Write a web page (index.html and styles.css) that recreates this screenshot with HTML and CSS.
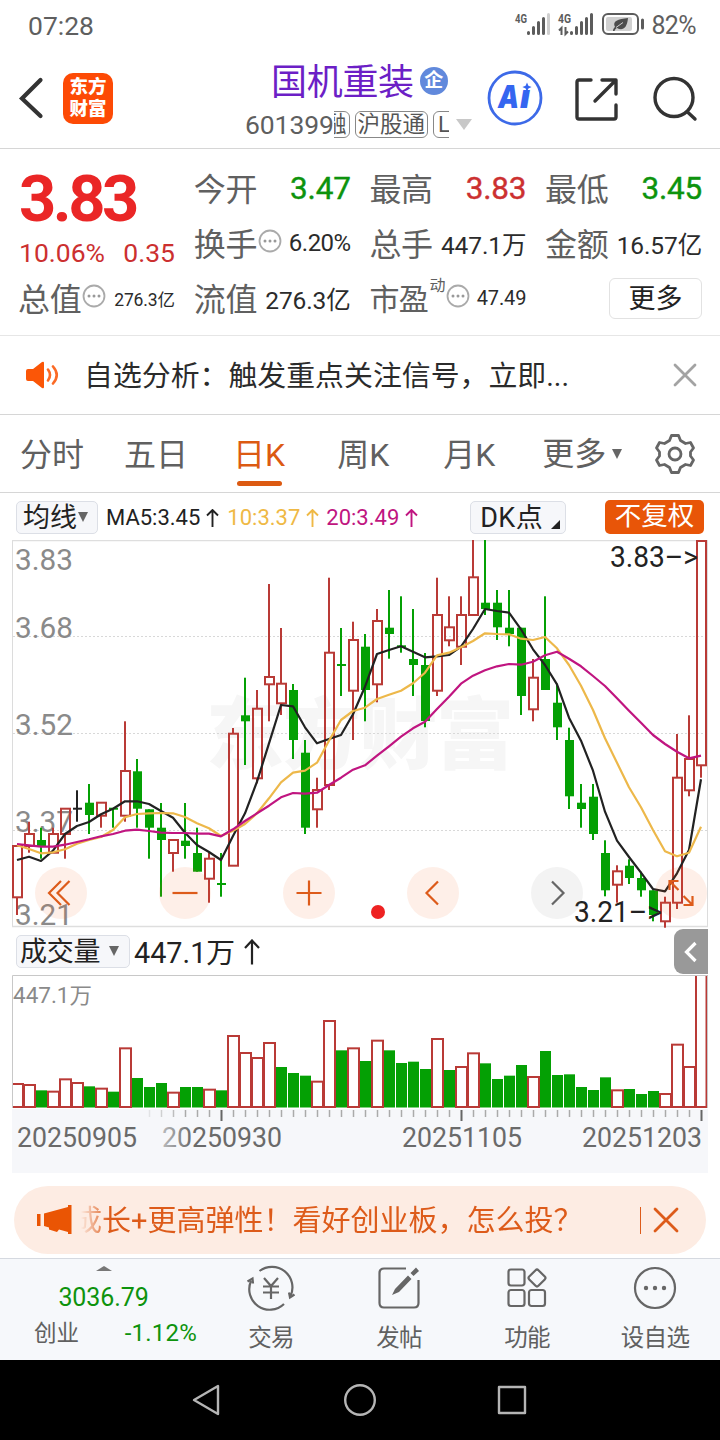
FILE: index.html
```html
<!DOCTYPE html>
<html lang="zh-CN">
<head>
<meta charset="utf-8">
<title>国机重装 601399</title>
<link rel="stylesheet" href="styles.css">
</head>
<body>
<div class="phone">
  <div class="status">
    <span class="clock">07:28</span>
    <div class="status-right">
      <svg width="132" height="28" viewBox="513 10 132 28">
        <g class="sig-text"><text x="515" y="23" textLength="12" lengthAdjust="spacingAndGlyphs">4G</text><text x="558" y="23" textLength="13" lengthAdjust="spacingAndGlyphs">4G</text></g>
        <g stroke="#5c5c5c" stroke-width="3" stroke-linecap="round">
          <path d="M528.5 32.5v1M533.5 27.5v6M538.5 22.5v11M543.500 18.500v15M571.500 32.500v1M576.500 27.500v6M581.500 22.500v11M586.500 18.500v15M591.500 14.500v19"/>
          <path d="M548.500 14.500v19" stroke="#cfcfcf"/>
        </g>
        <path d="M561.500 35v-7l-2.500 2.500M565.500 27v7l2.500-2.500" fill="none" stroke="#5c5c5c" stroke-width="2"/>
        <rect x="603" y="14" width="35" height="20" rx="5" fill="none" stroke="#5c5c5c" stroke-width="2"/>
        <rect x="606" y="17" width="26" height="14" rx="2" fill="#d0d0d0"/>
        <path d="M613 31c0-2 .8-3 2-4-3-6 3-8 13-9-1 11-6 13-11 10-1.500.8-2 1.500-2.500 3z" fill="#4d4d4d"/>
        <path d="M616 27.500l7-5" stroke="#d0d0d0" stroke-width="1"/>
        <path d="M642.500 20v8" stroke="#5c5c5c" stroke-width="3" stroke-linecap="round"/>
      </svg>
      <span class="battery">82%</span>
    </div>
  </div>

  <header class="header">
    <svg class="back" width="26" height="44" viewBox="0 0 26 44"><path d="M22.500 4L4 22.500 22.500 40" fill="none" stroke="#333" stroke-width="4.200" stroke-linecap="round"/></svg>
    <div class="logo"><span>东方</span><span>财富</span></div>
    <div class="title">
      <div class="name-row"><span class="name">国机重装</span><span class="badge">企</span></div>
      <div class="code-row">
        <span class="code">601399</span>
        <span class="tags"><span class="tag tag-cut">融</span><span class="tag">沪股通</span><span class="tag tag-end">L</span></span>
        <i class="tri-grey"></i>
      </div>
    </div>
    <svg class="ai" width="56" height="56" viewBox="0 0 56 56">
      <circle cx="28" cy="28" r="26" fill="#fff" stroke="#3d6ae8" stroke-width="2.800"/>
      <text class="ai-text" x="11" y="38" textLength="21" lengthAdjust="spacingAndGlyphs">A</text>
      <text class="ai-text" x="33" y="38" textLength="10" lengthAdjust="spacingAndGlyphs">ı</text>
      <path d="M40 12.500l1.400 3.200 3.200 1.400-3.200 1.400L40 21.700l-1.400-3.200-3.200-1.400 3.200-1.400z" fill="#3566f0"/>
    </svg>
    <svg class="share" width="46" height="46" viewBox="0 0 46 46" fill="none" stroke="#333" stroke-width="3.400" stroke-linecap="round" stroke-linejoin="round"><path d="M17 4H5q-2 0-2 2V41q0 2 2 2H40q2 0 2-2V29M28 4H42V18M41 5L21 25"/></svg>
    <svg class="search" width="46" height="46" viewBox="0 0 46 46" fill="none" stroke="#333" stroke-width="3.400" stroke-linecap="round"><circle cx="22" cy="21.500" r="19"/><path d="M35.500 36L43 43"/></svg>
  </header>

  <section class="quote">
    <div class="col first">
      <div class="price">3.83</div>
      <div class="chg"><span>10.06%</span><span>0.35</span></div>
      <div class="cell last-cell"><span class="lab">总值</span><svg class="info" viewBox="0 0 24 24"><use href="#dots"/></svg><span class="val v-s">276.3亿</span></div>
    </div>
    <div class="col">
      <div class="cell"><span class="lab">今开</span><span class="val v-l green">3.47</span></div>
      <div class="cell"><span class="lab">换手</span><svg class="info" viewBox="0 0 24 24"><use href="#dots"/></svg><span class="val v-pct">6.20%</span></div>
      <div class="cell"><span class="lab">流值</span><span class="val">276.3亿</span></div>
    </div>
    <div class="col">
      <div class="cell"><span class="lab">最高</span><span class="val v-l red">3.83</span></div>
      <div class="cell"><span class="lab">总手</span><span class="val">447.1万</span></div>
      <div class="cell"><span class="lab lab-pe">市盈</span><sup class="dyn">动</sup><svg class="info" viewBox="0 0 24 24"><g id="dots"><circle cx="12" cy="12" r="10.500" fill="none" stroke="#aaa" stroke-width="1.800"/><g fill="#999"><circle cx="7" cy="12" r="1.500"/><circle cx="12" cy="12" r="1.500"/><circle cx="17" cy="12" r="1.500"/></g></g></svg><span class="val v-m">47.49</span></div>
    </div>
    <div class="col">
      <div class="cell"><span class="lab">最低</span><span class="val v-l green">3.45</span></div>
      <div class="cell"><span class="lab">金额</span><span class="val">16.57亿</span></div>
      <div class="cell"><button class="more">更多</button></div>
    </div>
  </section>

  <section class="notice">
    <svg width="36" height="30" viewBox="0 0 36 30"><path d="M3 9h5l9-7q2-1 2 1v24q0 2-2 1l-9-7H3q-2 0-2-2v-8q0-2 2-2z" fill="#fb5607"/><path d="M23 9.500q4 5.500 0 11M28 6.500q7.500 8.500 0 17" fill="none" stroke="#fb6a25" stroke-width="2.600" stroke-linecap="round"/></svg>
    <span class="notice-text">自选分析：触发重点关注信号，立即...</span>
    <svg width="24" height="24" viewBox="0 0 24 24"><path d="M2 2l20 20M22 2L2 22" stroke="#a3a3a3" stroke-width="2.800" stroke-linecap="round"/></svg>
  </section>

  <nav class="tabs">
    <span>分时</span><span class="t-week5">五日</span><span class="on">日K</span><span class="t-week">周K</span><span class="t-month">月K</span><span class="tab-more">更多<i class="tri"></i></span>
    <svg width="42" height="42" viewBox="-21 -21 42 42" fill="none" stroke="#666" stroke-width="2.800" stroke-linejoin="round"><path d="M-3.500-18.500H3.500L5.500-13.500 10.500-10.500 15.500-11.500 18.500-6 15.500-2V2L18.500 6 15.500 11.500 10.500 10.500 5.500 13.500 3.500 18.500H-3.500L-5.500 13.500-10.500 10.500-15.500 11.500-18.500 6-15.500 2V-2L-18.500-6-15.500-11.500-10.500-10.500-5.500-13.500z"/><circle r="6"/></svg>
  </nav>

  <section class="indicator">
    <span class="chip chip-ma"><span class="lift">均线</span><i class="tri"></i></span>
    <span class="ma ma5">MA5:3.45<svg class="up" viewBox="0 0 13 18"><path d="M6.500 18V1M1 6.500L6.500 1 12 6.500"/></svg></span>
    <span class="ma ma10">10:3.37<svg class="up" viewBox="0 0 13 18"><path d="M6.500 18V1M1 6.500L6.500 1 12 6.500"/></svg></span>
    <span class="ma ma20">20:3.49<svg class="up" viewBox="0 0 13 18"><path d="M6.500 18V1M1 6.500L6.500 1 12 6.500"/></svg></span>
    <span class="chip chip-dk"><span class="lift">DK点</span><i class="corner"></i></span>
    <span class="adj">不复权</span>
  </section>

  <section class="kline">
    <svg id="kline" width="720" height="388" viewBox="0 540 720 388"></svg>
    <div class="controls">
      <button><svg viewBox="-26 -26 52 52"><path d="M0-12L-12 0 0 12M8.500-12L-3.500 0 8.500 12"/></svg></button>
      <button><svg viewBox="-26 -26 52 52"><path d="M-12.500 0h25"/></svg></button>
      <button><svg viewBox="-26 -26 52 52"><path d="M-12.500 0h25M0-12.500v25"/></svg></button>
      <button><svg viewBox="-26 -26 52 52"><path d="M5-11.500L-6.500 0 5 11.500"/></svg></button>
      <button class="grey"><svg viewBox="-26 -26 52 52"><path d="M-5-11.500L6.500 0-5 11.500"/></svg></button>
      <button><svg viewBox="-26 -26 52 52"><path d="M-11.500-3v-9h9M-11.500-12l9 9M11.500 3v9h-9M11.500 12l-9-9"/></svg></button>
    </div>
  </section>

  <section class="vol-head">
    <span class="chip chip-vol"><span class="lift">成交量</span><i class="tri"></i></span>
    <span class="vol-val lift">447.1万</span>
    <svg class="vol-up" viewBox="0 0 16 26"><path d="M8 25.500V2M1 9L8 1.500 15 9" fill="none" stroke="#222" stroke-width="2.200"/></svg>
    <span class="drawer"><svg width="14" height="22" viewBox="0 0 14 22"><path d="M11.500 2L2.500 11l9 9" fill="none" stroke="#fff" stroke-width="3.200"/></svg></span>
  </section>
  <svg id="volume" width="720" height="134" viewBox="0 975 720 134"></svg>
  <svg id="axis" width="720" height="64" viewBox="0 1109 720 64"></svg>

  <section class="promo">
    <svg width="36" height="30" viewBox="0 0 36 30" fill="#ea5504"><path d="M0 9h3.500v12H0zM7 8.500L31 2V0h3.500v29H31v-2l-9-2.500-2 2.500-8-2.500v-2L7 21z"/></svg>
    <div class="promo-clip"><span>成长+更高弹性！看好创业板，怎么投？</span></div>
    <i class="promo-line"></i>
    <svg width="26" height="26" viewBox="0 0 26 26"><path d="M2 2l22 22M24 2L2 24" stroke="#dd5b1a" stroke-width="2.800" stroke-linecap="round"/></svg>
  </section>

  <nav class="bottom">
    <div class="index">
      <i class="tri-up"></i>
      <div class="idx-num">3036.79</div>
      <div class="idx-row"><span>创业</span><span class="green">-1.12%</span></div>
    </div>
    <div class="item"><svg viewBox="-24 -22 48 44"><path d="M-11.500-17A20.500 20.500 0 0 1 19.500 8M13 16A20.500 20.500 0 0 1-20-7M-23.500-6.500L-18.500-9.500-18-4.500M23.500 6.500L19 9.500 18 4.500M-7-10L0-2 7-10M0-2V11M-8-1.500H8M-8 4.500H8"/></svg><span>交易</span></div>
    <div class="item"><svg viewBox="-24 -22 48 44"><path d="M7-19.500H-15q-4.500 0-4.500 4.500V15q0 4.500 4.500 4.500H15q4.500 0 4.500-4.500V-8"/><path d="M-7 7L-4 1 9-12.500 12.500-9 0 4zM11.500-15L17-20.500 20-17 14.500-12z" fill="#666" stroke="none"/></svg><span>发帖</span></div>
    <div class="item"><svg viewBox="-24 -22 48 44"><rect x="-18.500" y="-18.500" width="16" height="16" rx="2.500"/><rect x="-18.500" y="2" width="16" height="16" rx="2.500"/><rect x="2" y="2" width="16" height="16" rx="2.500"/><rect x="3.500" y="-16.500" width="13" height="13" rx="2" transform="rotate(45 10 -10)"/></svg><span>功能</span></div>
    <div class="item"><svg viewBox="-24 -22 48 44"><circle r="20"/><g fill="#666" stroke="none"><circle cx="-9" r="2.200"/><circle r="2.200"/><circle cx="9" r="2.200"/></g></svg><span>设自选</span></div>
  </nav>

  <div class="sysnav">
    <svg width="340" height="40" viewBox="190 0 340 40" fill="none" stroke="#b5b5b5" stroke-width="2.400" stroke-linejoin="round"><path d="M194 20L218 6V34z"/><circle cx="360" cy="20" r="14.800"/><rect x="499" y="7" width="26" height="26"/></svg>
  </div>
</div>
<script src="chart.js"></script>
</body>
</html>
```

FILE: styles.css
```css
* { box-sizing: border-box; }
body { margin: 0; background: #fff; }
button { border: 0; padding: 0; font: inherit; color: inherit; }
svg { display: block; flex: none; }
.phone {
  width: 720px; height: 1440px; overflow: hidden;
  display: flex; flex-direction: column;
  font-family: Roboto, "Noto Sans CJK SC", sans-serif;
  color: #222; white-space: nowrap;
}
.phone > * { flex: none; }
.green { color: #0d930d; }
.red { color: #cc3030; }
.lift { padding-bottom: 3px; }
.tri { display: inline-block; border: 5.500px solid transparent; border-top: 10px solid #666; border-bottom: 0; }

/* status bar */
.status { height: 50px; display: flex; justify-content: space-between; padding: 0 24px 0 28px; color: #5f5f5f; font-size: 26.500px; line-height: 52px; }
.status-right { display: flex; gap: 6px; }
.status-right svg { margin-top: 10px; }
.battery { font-size: 25px; letter-spacing: -0.600px; }
.sig-text { font-size: 12.500px; font-weight: 700; fill: #5c5c5c; }

/* header */
.header { height: 99px; border-bottom: 1px solid #d6d6d6; display: flex; align-items: flex-start; }
.back { margin: 26px 0 0 18px; }
.logo { margin: 23px 0 0 19px; width: 50px; height: 51px; border-radius: 10px; background: #fd4a05; color: #fff; display: flex; flex-direction: column; align-items: center; padding-top: 3px; font-size: 18.500px; line-height: 22px; font-weight: 900; }
.title { margin-left: 132px; width: 228px; }
.name-row { display: flex; align-items: center; height: 58px; padding-left: 26px; }
.name { font-size: 36px; color: #6c1fc6; letter-spacing: -0.300px; }
.badge { margin: 3px 0 0 6px; width: 28px; height: 28px; border-radius: 50%; background: #6189dc; color: #fff; font-size: 19px; line-height: 27px; text-align: center; font-weight: 700; }
.code-row { display: flex; align-items: center; height: 32px; }
.code { font-size: 26.500px; color: #5f5f5f; letter-spacing: -0.100px; width: 89px; }
.tags { display: flex; width: 115px; overflow: hidden; gap: 5px; }
.tag { flex: none; height: 27px; border: 1.500px solid #888; border-radius: 6px; padding: 0 2px; font-size: 22.500px; line-height: 24px; color: #555; }
.tag-cut { margin-left: -13px; }
.tag-end { padding-left: 4px; width: 30px; }
.tri-grey { margin-left: 7px; border: 8.500px solid transparent; border-top: 11px solid #c8c8c8; border-bottom: 0; }
.ai { margin: 20px 0 0 14px; }
.ai-text { font: italic 900 32px Inter, Roboto, sans-serif; fill: #3566f0; }
.share { margin: 26px 0 0 31px; }
.search { margin: 26px 0 0 32px; }

/* quote */
.quote { height: 187px; border-bottom: 1px solid #e6e6e6; padding: 12px 18px 0 18px; display: grid; grid-template-columns: 157px 157px 157px 157px; gap: 18.700px; }
.cell { display: flex; align-items: center; height: 55px; }
.lab { font-size: 32px; color: #606060; letter-spacing: -0.300px; padding-bottom: 4px; }
.lab-pe { font-size: 30px; letter-spacing: -0.500px; }
.val { margin-left: auto; font-size: 24.500px; color: #2b2b2b; letter-spacing: -0.100px; padding-bottom: 1px; }
.v-l { font-size: 31.500px; letter-spacing: -0.200px; -webkit-text-stroke: 0.400px currentColor; }
.v-pct { font-size: 24px; letter-spacing: -0.500px; }
.v-s { font-size: 17.500px; }
.v-m { font-size: 20px; }
.val.green { color: #0d930d; }
.val.red { color: #cc3030; }
.info { width: 24px; height: 24px; margin: -6px 0 0 1px; }
.dyn { font-size: 16px; color: #606060; align-self: flex-start; line-height: 18px; margin: 6px 0 0 1px; }
.price { height: 76px; font-size: 65px; line-height: 76px; font-weight: 700; color: #ea2626; letter-spacing: -3.500px; padding-left: 1px; }
.chg { height: 34px; display: flex; justify-content: space-between; font-size: 26.500px; line-height: 32px; color: #cc3030; padding-left: 1px; }
.more { width: 93px; height: 41px; margin-left: auto; border: 1.500px solid #e2e2e2; border-radius: 6px; background: #fff; font-size: 27px; line-height: 36px; color: #222; }

/* notice */
.notice { height: 79px; border-bottom: 1px solid #d6d6d6; display: flex; align-items: center; padding: 0 23px 0 25px; }
.notice-text { flex: 1; margin-left: 23px; padding-bottom: 4px; font-size: 28.900px; color: #2b2b2b; }

/* period tabs */
.tabs { height: 78px; border-bottom: 1px solid #d6d6d6; display: flex; align-items: center; padding: 0 24px 0 20px; font-size: 32px; color: #606060; }
.tabs span { height: 77px; line-height: 80px; }
.tabs .on { margin-left: 45px; color: #dc5a12; display: flex; flex-direction: column; align-items: center; }
.tabs .on::after { content: ""; width: 45px; height: 5px; border-radius: 3px; background: #dc5a12; margin-top: -14px; }
.tabs .t-week5 { margin-left: 40px; }
.tabs .t-week { margin-left: 52px; }
.tabs .t-month { margin-left: 54px; }
.tab-more { display: flex; align-items: center; gap: 6px; margin-left: 47px; }
.tabs svg { margin-left: auto; }

/* indicator */
.indicator { height: 47px; display: flex; align-items: center; padding: 2px 16px 0; font-size: 22px; }
.chip { background: #f6f7fa; border: 1px solid #dcdfe6; border-radius: 5px; display: flex; align-items: center; height: 33px; margin-top: -1px; font-size: 27px; }
.chip-ma { width: 82px; padding-left: 6px; gap: 1px; }
.ma { display: flex; align-items: center; gap: 6px; }
.ma5 { margin-left: 8px; }
.ma10 { margin-left: 8px; color: #efb945; }
.ma20 { margin-left: 7px; color: #c01580; }
.up { width: 13px; height: 18px; fill: none; stroke: currentColor; stroke-width: 1.900; }
.chip-dk { margin-left: 52px; width: 96px; padding-left: 9px; position: relative; letter-spacing: 0.400px; }
.corner { position: absolute; right: 5px; bottom: 4px; border-left: 9px solid transparent; border-bottom: 9px solid #222; }
.adj { margin: -1px 0 0 auto; width: 99px; height: 34px; border-radius: 5px; background: #e85508; color: #fff; font-size: 26.500px; line-height: 32px; text-align: center; }

/* candles */
.kline { position: relative; height: 388px; }
.controls { position: absolute; left: 35px; top: 327px; display: flex; gap: 72px; }
.controls button { width: 52px; height: 52px; border-radius: 50%; background: rgba(250, 100, 30, 0.100); }
.controls .grey { background: rgba(100, 100, 100, 0.080); }
.controls svg { fill: none; stroke: #dd5b1a; stroke-width: 2.200; }
.controls .grey svg { stroke: #666; }
.wm { font-size: 78px; font-weight: 900; fill: #f6f6f6; }
.scale { font-size: 30px; fill: #8a8a8a; }
.mark { font-size: 29px; fill: #222; }
.dates { font-size: 27.500px; fill: #6a6a6a; }
.vol-scale { font-size: 21.500px; fill: #8a8a8a; }

/* volume header */
.vol-head { height: 47px; display: flex; align-items: center; padding-left: 16px; }
.chip-vol { width: 114px; height: 33px; padding-left: 3px; gap: 9px; font-size: 27px; letter-spacing: -0.300px; }
.vol-val { margin-left: 4px; font-size: 28.800px; }
.vol-up { width: 16px; height: 26px; margin-left: 9px; }
.drawer { margin: 0 12px 0 auto; width: 34px; height: 45px; border-radius: 9px 0 0 9px; background: #999; display: flex; align-items: center; justify-content: center; }

/* promo */
.promo { margin: 13px 14px 0; height: 68px; border-radius: 34px; background: #fdece3; display: flex; align-items: center; padding: 0 27px 0 23px; }
.promo-clip { margin-left: 8px; padding-bottom: 4px; width: 505px; overflow: hidden; font-size: 29px; color: #dd5b1a; -webkit-mask-image: linear-gradient(90deg, transparent, #000 28px); mask-image: linear-gradient(90deg, transparent, #000 28px); }
.promo-clip span { display: block; margin-left: -8px; }
.promo-line { margin-left: auto; width: 1.500px; height: 27px; background: #dd5b1a; margin-right: 12px; }

/* bottom */
.bottom { margin-top: 4px; height: 102px; border-top: 1px solid #d5d9e0; background: #f6f8fb; display: flex; color: #606060; font-size: 22.500px; }
.index { width: 207px; display: flex; flex-direction: column; align-items: center; }
.tri-up { margin-top: 7px; border: 8px solid transparent; border-bottom: 5px solid #777; border-top: 0; }
.idx-num { margin-top: 11px; font-size: 25px; line-height: 32px; color: #0d930d; letter-spacing: -0.100px; }
.idx-row { width: 163px; display: flex; justify-content: space-between; margin-top: 3px; margin-left: 24px; line-height: 32px; }
.idx-row .green { font-size: 24px; letter-spacing: 0.200px; }
.item { width: 128px; display: flex; flex-direction: column; align-items: center; }
.item svg { width: 48px; height: 44px; margin-top: 7px; overflow: visible; fill: none; stroke: #666; stroke-width: 2.200; }
.item span { line-height: 30px; margin-top: 13px; font-size: 23.500px; letter-spacing: -0.700px; }
.sysnav { height: 80px; background: #000; display: flex; align-items: center; justify-content: center; }
```

FILE: chart.js
```js
// kind, high, body top, body bottom, low: in thirds of a pixel below y = 530
const candles = [
["r",948,948,1102,1155],["r",875,912,948,968],["g",893,930,948,986],["r",893,912,968,968],["r",836,836,912,986],
["k",781,836,836,875],["g",762,818,855,912],["r",818,818,857,893],["g",836,836,836,893],["r",574,723,857,875],
["g",687,724,836,893],["g",838,838,893,986],["g",819,893,930,1100],["r",930,930,969,1025],["g",819,932,948,986],
["g",893,969,1025,1025],["r",969,986,1046,1118],["g",969,1062,1062,1100],["r",594,611,1007,1007],["g",443,556,574,705],
["r",480,536,745,760],["r",162,441,463,574],["r",294,461,520,555],["g",462,480,630,687],["g",630,668,893,912],
["r",743,780,838,893],["r",143,368,765,780],["g",294,405,405,498],["r",275,330,482,630],["g",312,350,480,574],
["r",237,273,463,517],["g",180,293,312,386],["g",199,349,349,368],["g",237,387,405,498],["g",369,405,573,592],
["r",143,255,482,498],["r",199,292,331,349],["r",199,255,350,405],["r",30,142,255,255],["g",30,218,237,255],
["g",180,218,292,330],["g",180,293,312,349],["g",293,293,498,555],["r",387,443,538,574],["g",199,387,480,480],
["g",461,518,592,630],["g",593,630,799,837],["g",762,818,837,893],["g",762,800,912,930],["g",931,969,1081,1099],
["r",1006,1024,1064,1118],["g",988,1007,1044,1062],["g",1025,1044,1081,1100],["g",1081,1081,1155,1174],["r",1100,1118,1174,1193],
["r",612,743,1118,1137],["r",556,687,781,799],["r",33,33,706,743]];
const ma5 = [990,980,993,962,912,888,876,853,836,814,814,822,843,863,908,945,966,990,918,850,755,640,525,529,592,640,627,615,553,470,372,360,349,365,382,379,375,350,297,237,243,248,298,358,405,463,563,632,722,845,932,981,1028,1077,1084,1030,960,748];
const ma10 = [946,957,970,967,958,941,930,921,900,862,852,850,849,850,861,880,895,918,902,882,850,805,757,728,722,698,632,570,543,533,507,494,482,460,428,376,368,352,333,310,312,313,326,330,321,355,405,467,540,625,698,772,832,900,964,979,968,890];
const ma20 = [942,946,950,950,944,936,928,919,912,902,899,903,908,909,909,911,911,919,898,873,850,827,802,789,791,788,765,743,719,706,677,649,620,595,575,537,500,461,437,421,409,402,404,395,376,365,386,409,438,468,505,542,578,615,642,665,685,677];
// bar tops: in thirds of a pixel below y = 925
const volumes = "r477 r480 g496 r500 r463 r474 g484 r491 g500 r370 g459 g486 g474 r503 g486 g486 r494 g496 r333 r384 r399 r354 g426 g444 g452 r470 r288 g376 r370 g408 r347 g376 g414 g410 g432 r342 g435 r426 r385 g415 g462 g452 g420 r456 g378 g450 g448 g486 g495 g457 r496 g492 g507 g498 r507 r359 r426 r140".split(" ");
const colors = { r: "#b93a36", g: "#04a004", k: "#222" };
const py = v => +(530 + v / 3).toFixed(1);
const rect = (x, y, w, h, c) => `<rect x="${x}" y="${y}" width="${w}" height="${h}" fill="${c}"/>`;
const hollow = (x, y, w, h, fill = "none") => `<rect x="${x}" y="${y}" width="${w}" height="${h}" fill="${fill}" stroke="${colors.r}" stroke-width="2"/>`;
const label = (cls, x, y, w, t) => `<text class="${cls}" x="${x}" y="${y}" textLength="${w}" lengthAdjust="spacingAndGlyphs">${t}</text>`;

let k = `<text class="wm" x="206" y="763" textLength="308">东方财富</text>`;
for (const y of [636.5, 733.5, 830.5]) k += `<path d="M13 ${y}H707" stroke="#d8d8d8" stroke-dasharray="2 2"/>`;
k += `<path d="M12.500 541V927M707.500 541V927" stroke="#dcdcdc"/><path d="M12 540.500H708M12 926.500H708" stroke="#dedede" stroke-width="1.500"/>`;
k += [["3.83", 570], ["3.68", 638], ["3.52", 735], ["3.37", 832], ["3.21", 925]].map(([t, y]) => label("scale", 15, y, 58, t)).join("");
candles.forEach(([c, hi, top, bot, lo], i) => {
  const x = 12 + 12 * i, col = colors[c], a = py(top), b = py(bot);
  if (top === bot) {
    k += rect(x + 4, py(hi), 2, py(lo) - py(hi), col) + rect(x + 1, a - 1, 9, 2, col);
  } else if (c === "r") {
    k += rect(x + 4, py(hi), 2, a - py(hi), col) + rect(x + 4, b, 2, py(lo) - b, col) + hollow(x + 1, a, 9, b - a);
  } else {
    k += rect(x + 4, py(hi), 2, py(lo) - py(hi), col) + rect(x + 1, a, 9, b - a, col);
  }
});
for (const [line, col] of [[ma5, "#222"], [ma10, "#edb84a"], [ma20, "#c01580"]]) {
  k += `<polyline points="${line.map((v, i) => `${17 + 12 * i},${py(v)}`).join(" ")}" fill="none" stroke="${col}" stroke-width="2.200" stroke-linejoin="round"/>`;
}
k += label("mark", 610, 567, 88, "3.83–&gt;") + label("mark", 574, 922, 88, "3.21–&gt;");
k += `<circle cx="378" cy="912" r="7" fill="#ee2222"/>`;
document.getElementById("kline").innerHTML = k;

let v = label("vol-scale", 13, 1003, 79, "447.1万");
volumes.forEach((s, i) => {
  const x = 12 + 12 * i, y = 925 + s.slice(1) / 3;
  if (s[0] === "g") v += rect(x, y, 11, 1107.5 - y, colors.g);
});
volumes.forEach((s, i) => {
  const x = 12 + 12 * i, y = 925 + s.slice(1) / 3;
  if (s[0] === "r") v += hollow(x, y, i === 57 ? 10.5 : 11, 1107 - y, "#fff");
});
v += `<rect x="11" y="975" width="1" height="134" fill="#fff"/><path d="M12.500 1108V975.500H707.500V1108" fill="none" stroke="#c8c8c8"/>`;
document.getElementById("volume").innerHTML = v;

let a = rect(12, 1109, 696, 64, "#f6f7fa");
for (let i = 11; i < 58; i++) {
  const major = i === 17 || i === 37 || i === 57;
  a += `<path d="M${17.5 + 12 * i} 1110V${major ? 1121 : 1117}" stroke="${major ? "#666" : "#aaa"}" stroke-width="${major ? 2 : 1.5}" opacity="${Math.min(1, (i - 10) / 4)}"/>`;
}
a += label("dates", 17, 1147, 120, "20250905") + label("dates", 162, 1147, 120, "20250930") + label("dates", 402, 1147, 120, "20251105") + label("dates", 582, 1147, 120, "20251203");
a += `<defs><linearGradient id="fade"><stop offset="0" stop-color="#f6f7fa" stop-opacity="0.800"/><stop offset="1" stop-color="#f6f7fa" stop-opacity="0"/></linearGradient></defs><rect x="150" y="1122" width="42" height="34" fill="url(#fade)"/>`;
document.getElementById("axis").innerHTML = a;
```
